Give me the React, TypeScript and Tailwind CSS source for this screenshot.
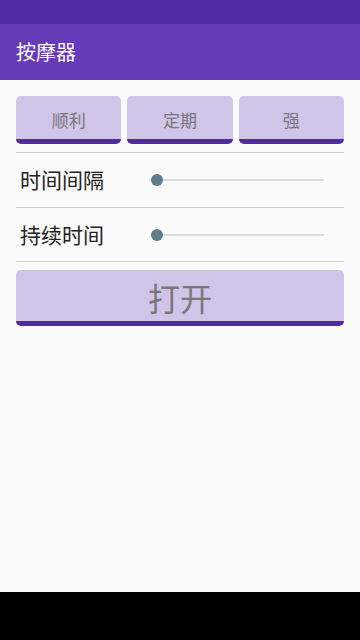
import React from "react";

const font = { fontFamily: '"Noto Sans CJK SC", "Noto Sans", sans-serif' };

function Slider() {
  return (
    <div className="relative flex-1 h-3 ml-[31px] mr-[20px]">
      <div className="absolute left-0 right-0 top-[5px] h-[2px] bg-[#dcdcdc]" />
      <div className="absolute left-[-6px] top-0 w-3 h-3 rounded-full bg-[#607d8b]" />
    </div>
  );
}

function Btn({ label }: { label: string }) {
  return (
    <div className="flex items-center justify-center pt-[4px] rounded-[5px] bg-[#d1c4e9] border-b-[5px] border-[#4e2ca0] text-[17px] text-[#777]">
      {label}
    </div>
  );
}

export default function App() {
  return (
    <div className="w-[360px] h-[640px] flex flex-col bg-[#fafafa]" style={font}>
      <div className="h-6 bg-[#4f2ca6]" />
      <div className="h-14 bg-[#673ab7] flex items-center px-4 text-white text-[20px]">按摩器</div>
      <div className="flex-1 px-4 pt-4 flex flex-col">
        <div className="grid grid-cols-3 gap-[6px] h-12">
          <Btn label="顺利" />
          <Btn label="定期" />
          <Btn label="强" />
        </div>
        <div className="mt-2 h-px bg-[#cccccc]" />
        <div className="h-[54px] flex items-center">
          <div className="w-[110px] pl-1 text-[21px] text-[#222]">时间间隔</div>
          <Slider />
        </div>
        <div className="h-px bg-[#cccccc]" />
        <div className="h-[53px] flex items-center">
          <div className="w-[110px] pl-1 text-[21px] text-[#222]">持续时间</div>
          <Slider />
        </div>
        <div className="h-px bg-[#cccccc]" />
        <div className="mt-2 h-14 flex items-center justify-center pt-[2px] rounded-[5px] bg-[#d1c4e9] border-b-[5px] border-[#4e2ca0] text-[32px] text-[#777]">
          打开
        </div>
      </div>
      <div className="h-12 bg-black" />
    </div>
  );
}
